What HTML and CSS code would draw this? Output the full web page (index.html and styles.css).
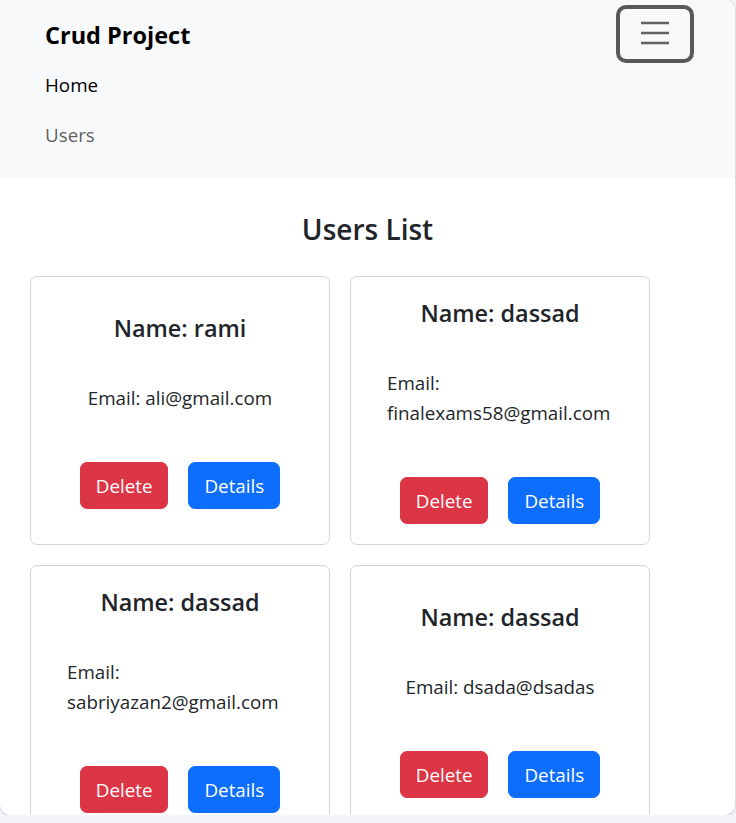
FILE: index.html
```html
<!DOCTYPE html>
<html lang="en">
<head>
<meta charset="utf-8">
<title>Crud Project</title>
<link rel="stylesheet" href="styles.css">
</head>
<body>
<div class="frame">
  <nav class="navbar">
    <div class="nav-top">
      <a class="brand" href="#">Crud Project</a>
      <button class="toggler" type="button" aria-label="Toggle navigation">
        <svg width="30" height="30" viewBox="0 0 30 30" aria-hidden="true">
          <path d="M1 5H29M1 15H29M1 25H29" stroke="#626262" stroke-width="2.6" fill="none"/>
        </svg>
      </button>
    </div>
    <ul class="nav-links">
      <li><a class="nav-link active" href="#">Home</a></li>
      <li><a class="nav-link" href="#">Users</a></li>
    </ul>
  </nav>
  <main class="content">
    <h2 class="page-title">Users List</h2>
    <div class="card-grid">
      <div class="card">
        <h5 class="card-title">Name: rami</h5>
        <p class="card-email">Email: ali@gmail.com</p>
        <div class="actions">
          <button class="btn btn-danger">Delete</button>
          <button class="btn btn-primary">Details</button>
        </div>
      </div>
      <div class="card">
        <h5 class="card-title">Name: dassad</h5>
        <p class="card-email">Email: finalexams58@gmail.com</p>
        <div class="actions">
          <button class="btn btn-danger">Delete</button>
          <button class="btn btn-primary">Details</button>
        </div>
      </div>
      <div class="card">
        <h5 class="card-title">Name: dassad</h5>
        <p class="card-email">Email: sabriyazan2@gmail.com</p>
        <div class="actions">
          <button class="btn btn-danger">Delete</button>
          <button class="btn btn-primary">Details</button>
        </div>
      </div>
      <div class="card">
        <h5 class="card-title">Name: dassad</h5>
        <p class="card-email">Email: dsada@dsadas</p>
        <div class="actions">
          <button class="btn btn-danger">Delete</button>
          <button class="btn btn-primary">Details</button>
        </div>
      </div>
    </div>
  </main>
</div>
</body>
</html>
```

FILE: styles.css
```css
* { box-sizing: border-box; }

html, body {
  margin: 0;
  padding: 0;
}

body {
  background: #f3f5f9;
  font-family: "Open Sans", "Noto Sans", "Liberation Sans", sans-serif;
  font-size: 18.8px;
  line-height: 30px;
  color: #212529;
}

.frame {
  width: 735px;
  height: 815px;
  overflow: hidden;
  background: #ffffff;
  border-radius: 0 10px 10px 10px;
  box-shadow: 0 0 0 1px rgba(0, 0, 0, 0.06), 0 1px 3px rgba(0, 0, 0, 0.12);
}

.navbar {
  background: #f8f9fa;
  padding: 10px 41px 18px 45px;
}

.nav-top {
  display: flex;
  justify-content: space-between;
  align-items: flex-start;
  height: 50px;
}

.brand {
  font-size: 23.5px;
  font-weight: 700;
  line-height: 50px;
  color: #000;
  text-decoration: none;
}

.toggler {
  margin-top: -5px;
  width: 78px;
  height: 58px;
  padding: 0;
  border: 4px solid #58595b;
  border-radius: 10px;
  background: transparent;
  display: flex;
  align-items: center;
  justify-content: center;
}

.toggler svg {
  display: block;
  margin-top: -2px;
}

.nav-links {
  list-style: none;
  margin: 0;
  padding: 0;
}

.nav-link {
  display: block;
  padding: 10px 0;
  line-height: 30px;
  font-size: 18.8px;
  color: rgba(0, 0, 0, 0.65);
  text-decoration: none;
}

.nav-link.active {
  color: #000;
}

.page-title {
  margin: 33px 0 29px;
  text-align: center;
  font-size: 28px;
  line-height: 36px;
  font-weight: 600;
}

.card-grid {
  display: grid;
  grid-template-columns: 300px 300px;
  gap: 20px;
  padding: 0 30px;
}

.card {
  border: 1px solid #d4d4d4;
  border-radius: 7px;
  padding: 21px 36px 20px;
  display: flex;
  flex-direction: column;
  align-items: center;
  justify-content: center;
}

.card-title {
  margin: 0 0 40px;
  font-size: 23.4px;
  line-height: 30px;
  font-weight: 600;
  text-align: center;
}

.card-email {
  margin: 0 0 49px;
  line-height: 30px;
  text-align: left;
}

.actions {
  display: flex;
  gap: 20px;
}

.btn {
  font-family: inherit;
  font-size: 18.8px;
  line-height: 30px;
  padding: 7.5px 15px;
  border: 1px solid transparent;
  border-radius: 7px;
  color: #fff;
  cursor: pointer;
}

.btn-danger {
  background: #dc3545;
  border-color: #dc3545;
}

.btn-primary {
  background: #0d6efd;
  border-color: #0d6efd;
}
```
